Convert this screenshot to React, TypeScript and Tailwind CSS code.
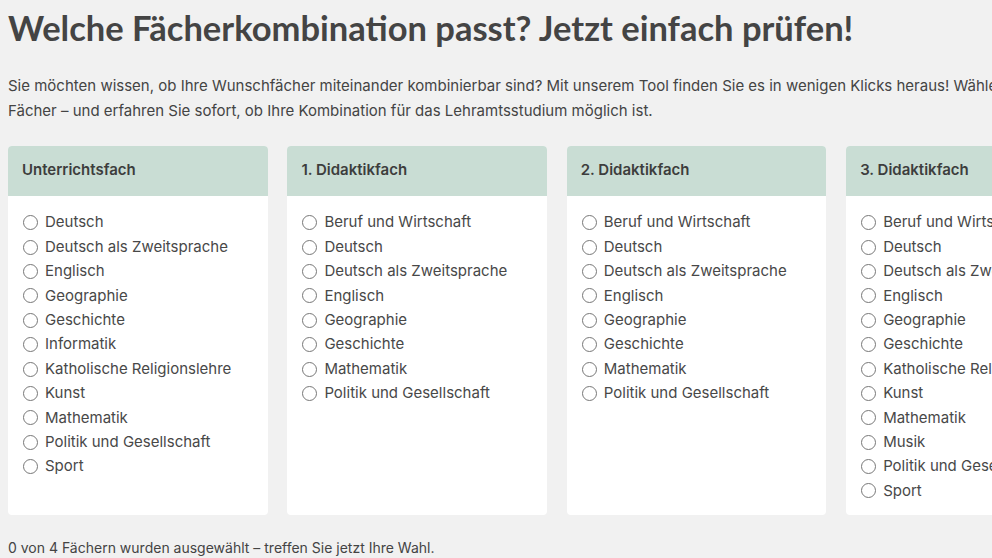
import React from "react";

type Column = {
  title: string;
  items: string[];
};

const columns: Column[] = [
  {
    title: "Unterrichtsfach",
    items: [
      "Deutsch",
      "Deutsch als Zweitsprache",
      "Englisch",
      "Geographie",
      "Geschichte",
      "Informatik",
      "Katholische Religionslehre",
      "Kunst",
      "Mathematik",
      "Politik und Gesellschaft",
      "Sport",
    ],
  },
  {
    title: "1. Didaktikfach",
    items: [
      "Beruf und Wirtschaft",
      "Deutsch",
      "Deutsch als Zweitsprache",
      "Englisch",
      "Geographie",
      "Geschichte",
      "Mathematik",
      "Politik und Gesellschaft",
    ],
  },
  {
    title: "2. Didaktikfach",
    items: [
      "Beruf und Wirtschaft",
      "Deutsch",
      "Deutsch als Zweitsprache",
      "Englisch",
      "Geographie",
      "Geschichte",
      "Mathematik",
      "Politik und Gesellschaft",
    ],
  },
  {
    title: "3. Didaktikfach",
    items: [
      "Beruf und Wirtschaft",
      "Deutsch",
      "Deutsch als Zweitsprache",
      "Englisch",
      "Geographie",
      "Geschichte",
      "Katholische Religionslehre",
      "Kunst",
      "Mathematik",
      "Musik",
      "Politik und Gesellschaft",
      "Sport",
    ],
  },
];

const SubjectCard = ({ title, items }: Column) => {
  return (
    <div className="w-[259.7px] shrink-0 rounded-[4px] bg-white overflow-hidden flex flex-col">
      <div className="bg-[#c9ddd4] h-[50px] flex items-center px-[14px]">
        <p className="font-semibold text-[15px] text-[#3d3d3d]">{title}</p>
      </div>
      <div className="px-[15px] pt-[15px] pb-[12px]">
        {items.map((item, idx) => (
          <label key={idx} className="flex items-center gap-[7px] h-[24.4px] text-[15px] text-[#484848] whitespace-nowrap">
            <span className="w-[15px] h-[15px] rounded-full border border-[#777] bg-white shrink-0" />
            {item}
          </label>
        ))}
      </div>
    </div>
  );
};

export default function App() {
  return (
    <div className="w-[992px] h-[558px] overflow-hidden bg-[#f1f1f1] text-[#444] font-['Inter',sans-serif]">
      <div className="pl-[8px] w-[1200px]">
        <h1 className="font-['Lato',sans-serif] font-bold text-[34.5px] leading-[1] pt-[11px] text-[#444]">
          Welche Fächerkombination passt? Jetzt einfach prüfen!
        </h1>

        <p className="mt-[27px] text-[15px] leading-[25px] whitespace-nowrap">
          Sie möchten wissen, ob Ihre Wunschfächer miteinander kombinierbar sind? Mit unserem Tool finden Sie es in wenigen Klicks heraus! Wählen Sie Ihre
          <br />
          Fächer – und erfahren Sie sofort, ob Ihre Kombination für das Lehramtsstudium möglich ist.
        </p>

        <div className="flex gap-[19.7px] mt-[23px]">
          {columns.map((col) => (
            <SubjectCard key={col.title} title={col.title} items={col.items} />
          ))}
        </div>

        <p className="mt-[22px] text-[14px]">0 von 4 Fächern wurden ausgewählt – treffen Sie jetzt Ihre Wahl.</p>
      </div>
    </div>
  );
}
